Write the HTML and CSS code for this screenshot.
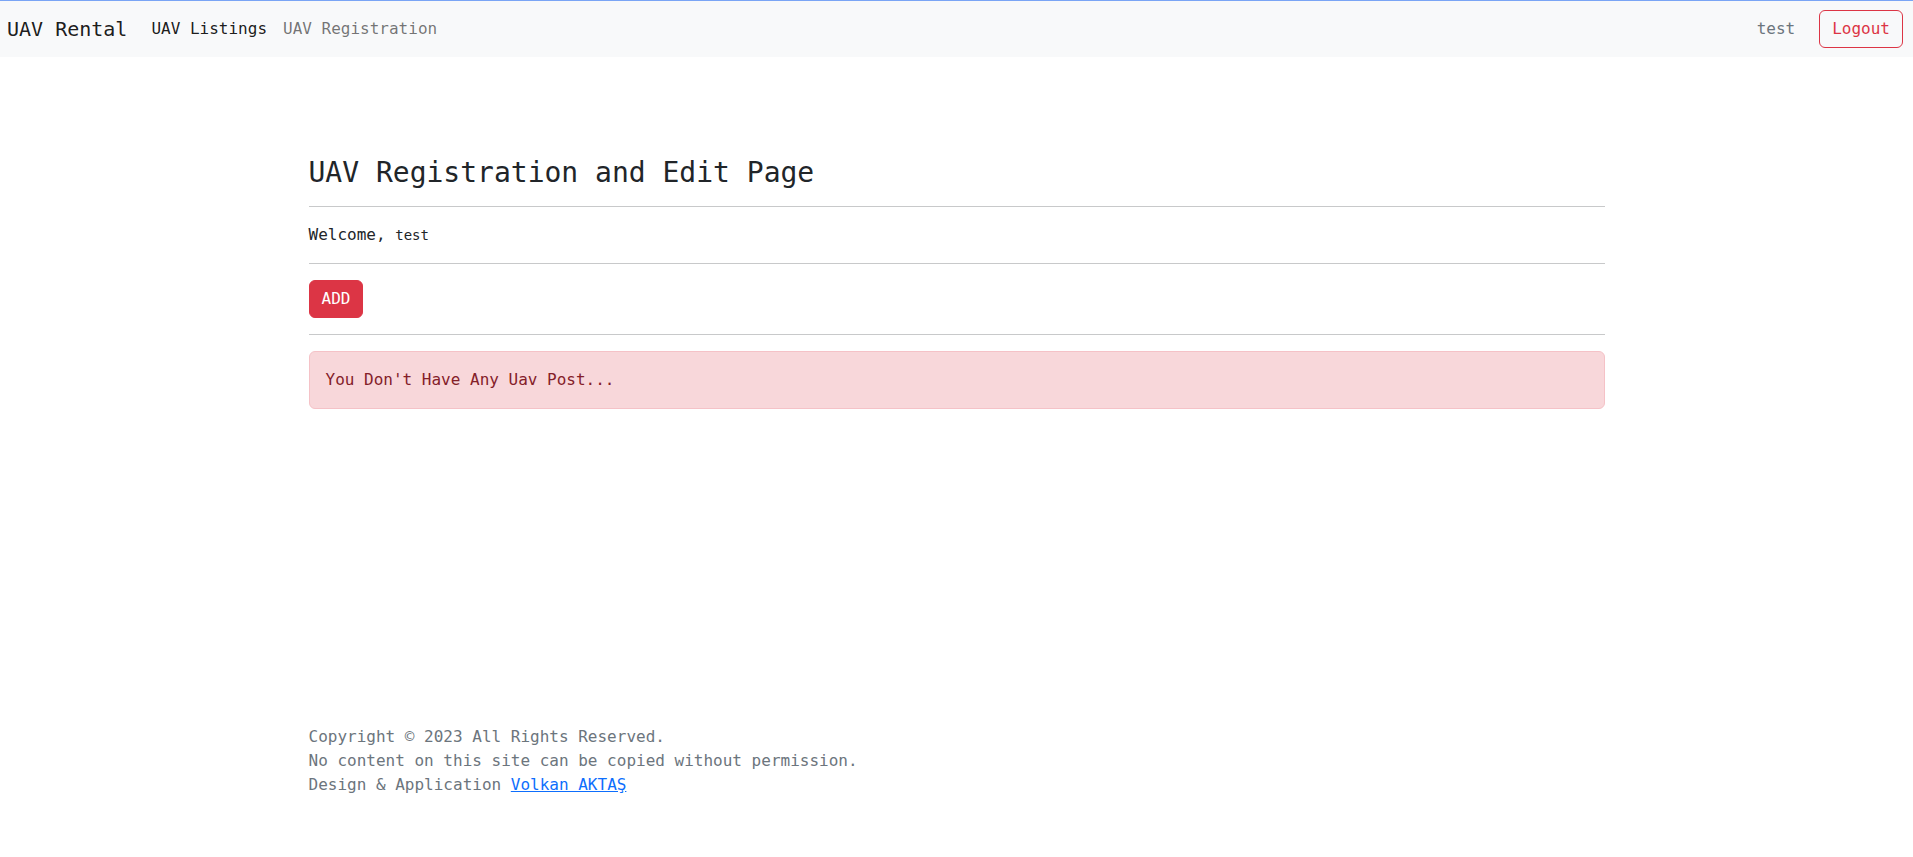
FILE: index.html
```html
<!DOCTYPE html>
<html lang="en">
<head>
<meta charset="utf-8">
<title>UAV Rental</title>
<link rel="stylesheet" href="styles.css">
</head>
<body class="page">
<nav class="navbar">
  <a class="brand" href="#">UAV Rental</a>
  <ul class="nav">
    <li><a class="nav-link active" href="#">UAV Listings</a></li>
    <li><a class="nav-link" href="#">UAV Registration</a></li>
  </ul>
  <div class="nav-right">
    <span class="nav-user">test</span>
    <button class="btn btn-outline-danger" type="button">Logout</button>
  </div>
</nav>
<main class="container main">
  <h3 class="title">UAV Registration and Edit Page</h3>
  <hr class="divider">
  <p class="welcome">Welcome, <span class="welcome-user">test</span></p>
  <hr class="divider">
  <div class="actions"><button class="btn btn-danger" type="button">ADD</button></div>
  <hr class="divider">
  <div class="alert">You Don't Have Any Uav Post...</div>
</main>
<footer class="container footer">
  <p class="footer-text">Copyright © 2023 All Rights Reserved.<br>No content on this site can be copied without permission.<br>Design &amp; Application <a class="footer-link" href="#">Volkan AKTAŞ</a></p>
</footer>
</body>
</html>
```
FILE: styles.css
```css
* { box-sizing: border-box; }
html, body { margin: 0; padding: 0; }
.page {
  font-family: "DejaVu Sans Mono", "Liberation Mono", monospace;
  font-size: 16px;
  line-height: 1.5;
  color: #212529;
  background: #fff;
  min-height: 100vh;
  display: flex;
  flex-direction: column;
}
.navbar {
  display: flex;
  align-items: center;
  background: #f8f9fa;
  border-top: 1px solid #7aa5f5;
  padding: 8px 10px 8px 7px;
}
.brand {
  font-size: 20px;
  line-height: 30px;
  color: rgba(0,0,0,.9);
  text-decoration: none;
  margin-right: 16px;
}
.nav {
  display: flex;
  list-style: none;
  margin: 0;
  padding: 0;
}
.nav-link {
  display: block;
  padding: 8px;
  color: rgba(0,0,0,.55);
  text-decoration: none;
}
.nav-link.active { color: rgba(0,0,0,.9); }
.nav-right {
  margin-left: auto;
  display: flex;
  align-items: center;
}
.nav-user {
  padding: 8px;
  margin-right: 16px;
  color: #6c757d;
}
.btn {
  font-family: inherit;
  font-size: 16px;
  line-height: 24px;
  padding: 6px 12px;
  border-radius: 6px;
  border: 1px solid transparent;
  cursor: pointer;
}
.btn-outline-danger {
  background: transparent;
  color: #dc3545;
  border-color: #dc3545;
}
.btn-danger {
  background: #dc3545;
  color: #fff;
  border-color: #dc3545;
}
.container {
  width: 1320px;
  margin: 0 auto;
  padding: 0 12px;
}
.main { padding-top: 99px; }
.title {
  font-size: 28px;
  font-weight: 500;
  line-height: 1.2;
  margin: 0 0 8px;
}
.divider {
  margin: 16px 0;
  border: 0;
  border-top: 1px solid #c8c9ca;
}
.welcome { margin: 0 0 16px; }
.welcome-user { font-size: 14px; }
.actions { display: flex; }
.alert {
  padding: 16px;
  margin-bottom: 16px;
  border: 1px solid #f5c2c7;
  background: #f8d7da;
  color: #842029;
  border-radius: 6px;
}
.footer {
  margin-top: auto;
  padding-bottom: 60px;
}
.footer-text {
  margin: 0;
  color: #6c757d;
}
.footer-link { color: #0d6efd; }
```
